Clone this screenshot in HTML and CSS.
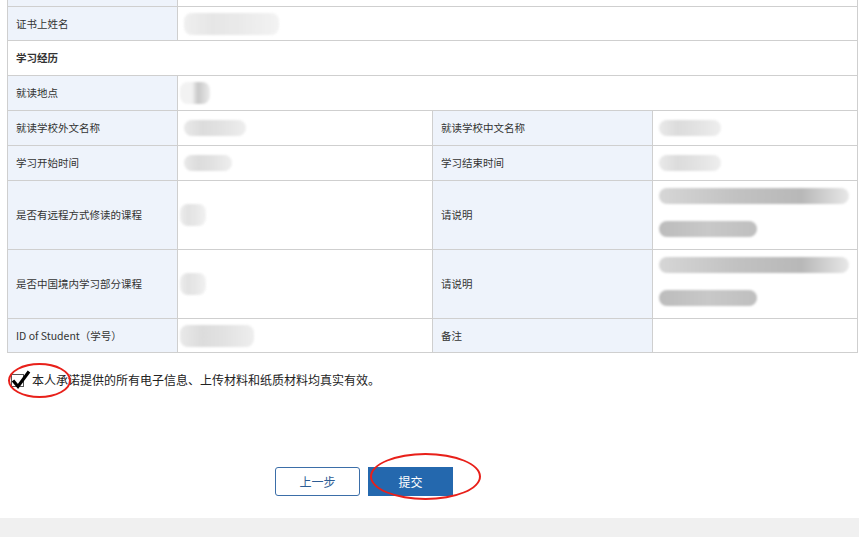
FILE: index.html
```html
<!DOCTYPE html>
<html lang="zh-CN">
<head>
    <meta charset="UTF-8">
    <meta name="viewport" content="width=device-width, initial-scale=1.0">
    <title>学历信息确认</title>
    <link rel="stylesheet" href="styles.css">
</head>
<body>
    <div class="page">
        <table class="info">
            <colgroup>
                <col class="c-label">
                <col class="c-value">
                <col class="c-label2">
                <col class="c-value2">
            </colgroup>
            <tr>
                <td class="label"></td>
                <td colspan="3"></td>
            </tr>
            <tr class="short">
                <td class="label">证书上姓名</td>
                <td colspan="3"><span class="mask mask-name"></span></td>
            </tr>
            <tr>
                <th colspan="4">学习经历</th>
            </tr>
            <tr>
                <td class="label">就读地点</td>
                <td colspan="3"><span class="mask mask-place"></span></td>
            </tr>
            <tr>
                <td class="label">就读学校外文名称</td>
                <td><span class="mask mask-md"></span></td>
                <td class="label">就读学校中文名称</td>
                <td><span class="mask mask-md"></span></td>
            </tr>
            <tr>
                <td class="label">学习开始时间</td>
                <td><span class="mask mask-sm"></span></td>
                <td class="label">学习结束时间</td>
                <td><span class="mask mask-md"></span></td>
            </tr>
            <tr class="tall">
                <td class="label">是否有远程方式修读的课程</td>
                <td><span class="mask mask-xs"></span></td>
                <td class="label">请说明</td>
                <td class="notes">
                    <span class="mask mask-line"></span>
                    <span class="mask mask-half"></span>
                </td>
            </tr>
            <tr class="tall">
                <td class="label">是否中国境内学习部分课程</td>
                <td><span class="mask mask-xs"></span></td>
                <td class="label">请说明</td>
                <td class="notes">
                    <span class="mask mask-line"></span>
                    <span class="mask mask-half"></span>
                </td>
            </tr>
            <tr class="short">
                <td class="label">ID of Student（学号）</td>
                <td><span class="mask mask-id"></span></td>
                <td class="label">备注</td>
                <td></td>
            </tr>
        </table>

        <div class="promise">
            <span class="check">
                <svg width="20" height="20" viewBox="0 0 20 20">
                    <path d="M2 10.5 L7 16.5 L18 1.5" fill="none" stroke="#000" stroke-width="3.2"/>
                </svg>
            </span>
            本人承诺提供的所有电子信息、上传材料和纸质材料均真实有效。
            <span class="mark mark-check"></span>
        </div>

        <div class="actions">
            <button class="btn btn-prev">上一步</button>
            <div class="submit-wrap">
                <button class="btn btn-submit">提交</button>
                <span class="mark mark-submit"></span>
            </div>
        </div>
    </div>
    <div class="footer-band"></div>
</body>
</html>
```

FILE: styles.css
```css
* {
    margin: 0;
    padding: 0;
    box-sizing: border-box;
}

body {
    font-family: "Noto Sans CJK SC", "Liberation Sans", sans-serif;
    color: #333;
    background: #fff;
    overflow: hidden;
}

.page {
    padding-left: 7px;
    padding-right: 2px;
}

.info {
    width: 850px;
    border-collapse: collapse;
    table-layout: fixed;
    margin-top: -29px;
    font-size: 10.5px;
}

.c-label { width: 170px; }
.c-value { width: 255px; }
.c-label2 { width: 220px; }
.c-value2 { width: 205px; }

.info td,
.info th {
    border: 1px solid #cfcfcf;
    height: 35px;
    padding: 0 8px;
    vertical-align: middle;
    text-align: left;
    line-height: 14px;
}

.info .short td {
    height: 34px;
}

.info th {
    font-weight: bold;
    background: #fff;
}

.info .label {
    background: #eef3fb;
}

.info .tall td {
    height: 69px;
}

.info td.notes {
    vertical-align: top;
    padding-top: 7px;
}

.mask {
    display: block;
    height: 16px;
    border-radius: 8px;
    background: linear-gradient(90deg, #e9e9e9 0%, #dcdcdc 30%, #e2e2e2 60%, #eeeeee 100%);
    filter: blur(1px);
}

.mask-name { width: 95px; margin-left: -2px; height: 22px; opacity: 0.7; }
.mask-place { width: 30px; height: 22px; margin-left: -6px; background: linear-gradient(90deg, #f2f2f2 40%, #c8c8c8 60%, #ececec 100%); }
.mask-md { width: 62px; margin-left: -2px; }
.mask-sm { width: 48px; margin-left: -2px; }
.mask-xs { width: 26px; height: 22px; margin-left: -6px; opacity: 0.8; }
.mask-id { width: 74px; height: 22px; margin-left: -6px; }

.mask-line {
    width: 190px;
    margin-left: -2px;
    background: linear-gradient(90deg, #d6d6d6, #c2c2c2 40%, #b8b8b8 75%, #e8e8e8);
}

.mask-half {
    width: 98px;
    margin-left: -2px;
    margin-top: 17px;
    background: linear-gradient(90deg, #bcbcbc, #c8c8c8 50%, #bfbfbf);
}

.promise {
    position: relative;
    display: flex;
    align-items: center;
    gap: 8px;
    margin-top: 19px;
    padding-left: 4px;
    font-size: 12px;
    line-height: 16px;
    color: #222;
}

.check {
    position: relative;
    display: inline-block;
    width: 13px;
    height: 13px;
    border: 1px solid #555;
    background: #fff;
}

.check svg {
    position: absolute;
    left: -1px;
    top: -5px;
}

.mark {
    position: absolute;
    border: 2px solid #e8201a;
    border-radius: 50%;
    pointer-events: none;
}

.mark-check {
    left: 1px;
    top: -9px;
    width: 63px;
    height: 35px;
}

.actions {
    display: flex;
    gap: 8px;
    margin-top: 79px;
    padding-left: 268px;
}

.btn {
    width: 85px;
    height: 29px;
    font-family: inherit;
    font-size: 12px;
    cursor: pointer;
}

.btn-prev {
    background: #fff;
    color: #2d5d94;
    border: 1px solid #3b6ea8;
    border-radius: 3px;
}

.submit-wrap {
    position: relative;
}

.btn-submit {
    background: #2468ae;
    color: #fff;
    border: none;
}

.mark-submit {
    left: 2px;
    top: -14px;
    width: 111px;
    height: 47px;
}

.footer-band {
    margin-top: 22px;
    height: 40px;
    background: #f0f0f0;
}
```
